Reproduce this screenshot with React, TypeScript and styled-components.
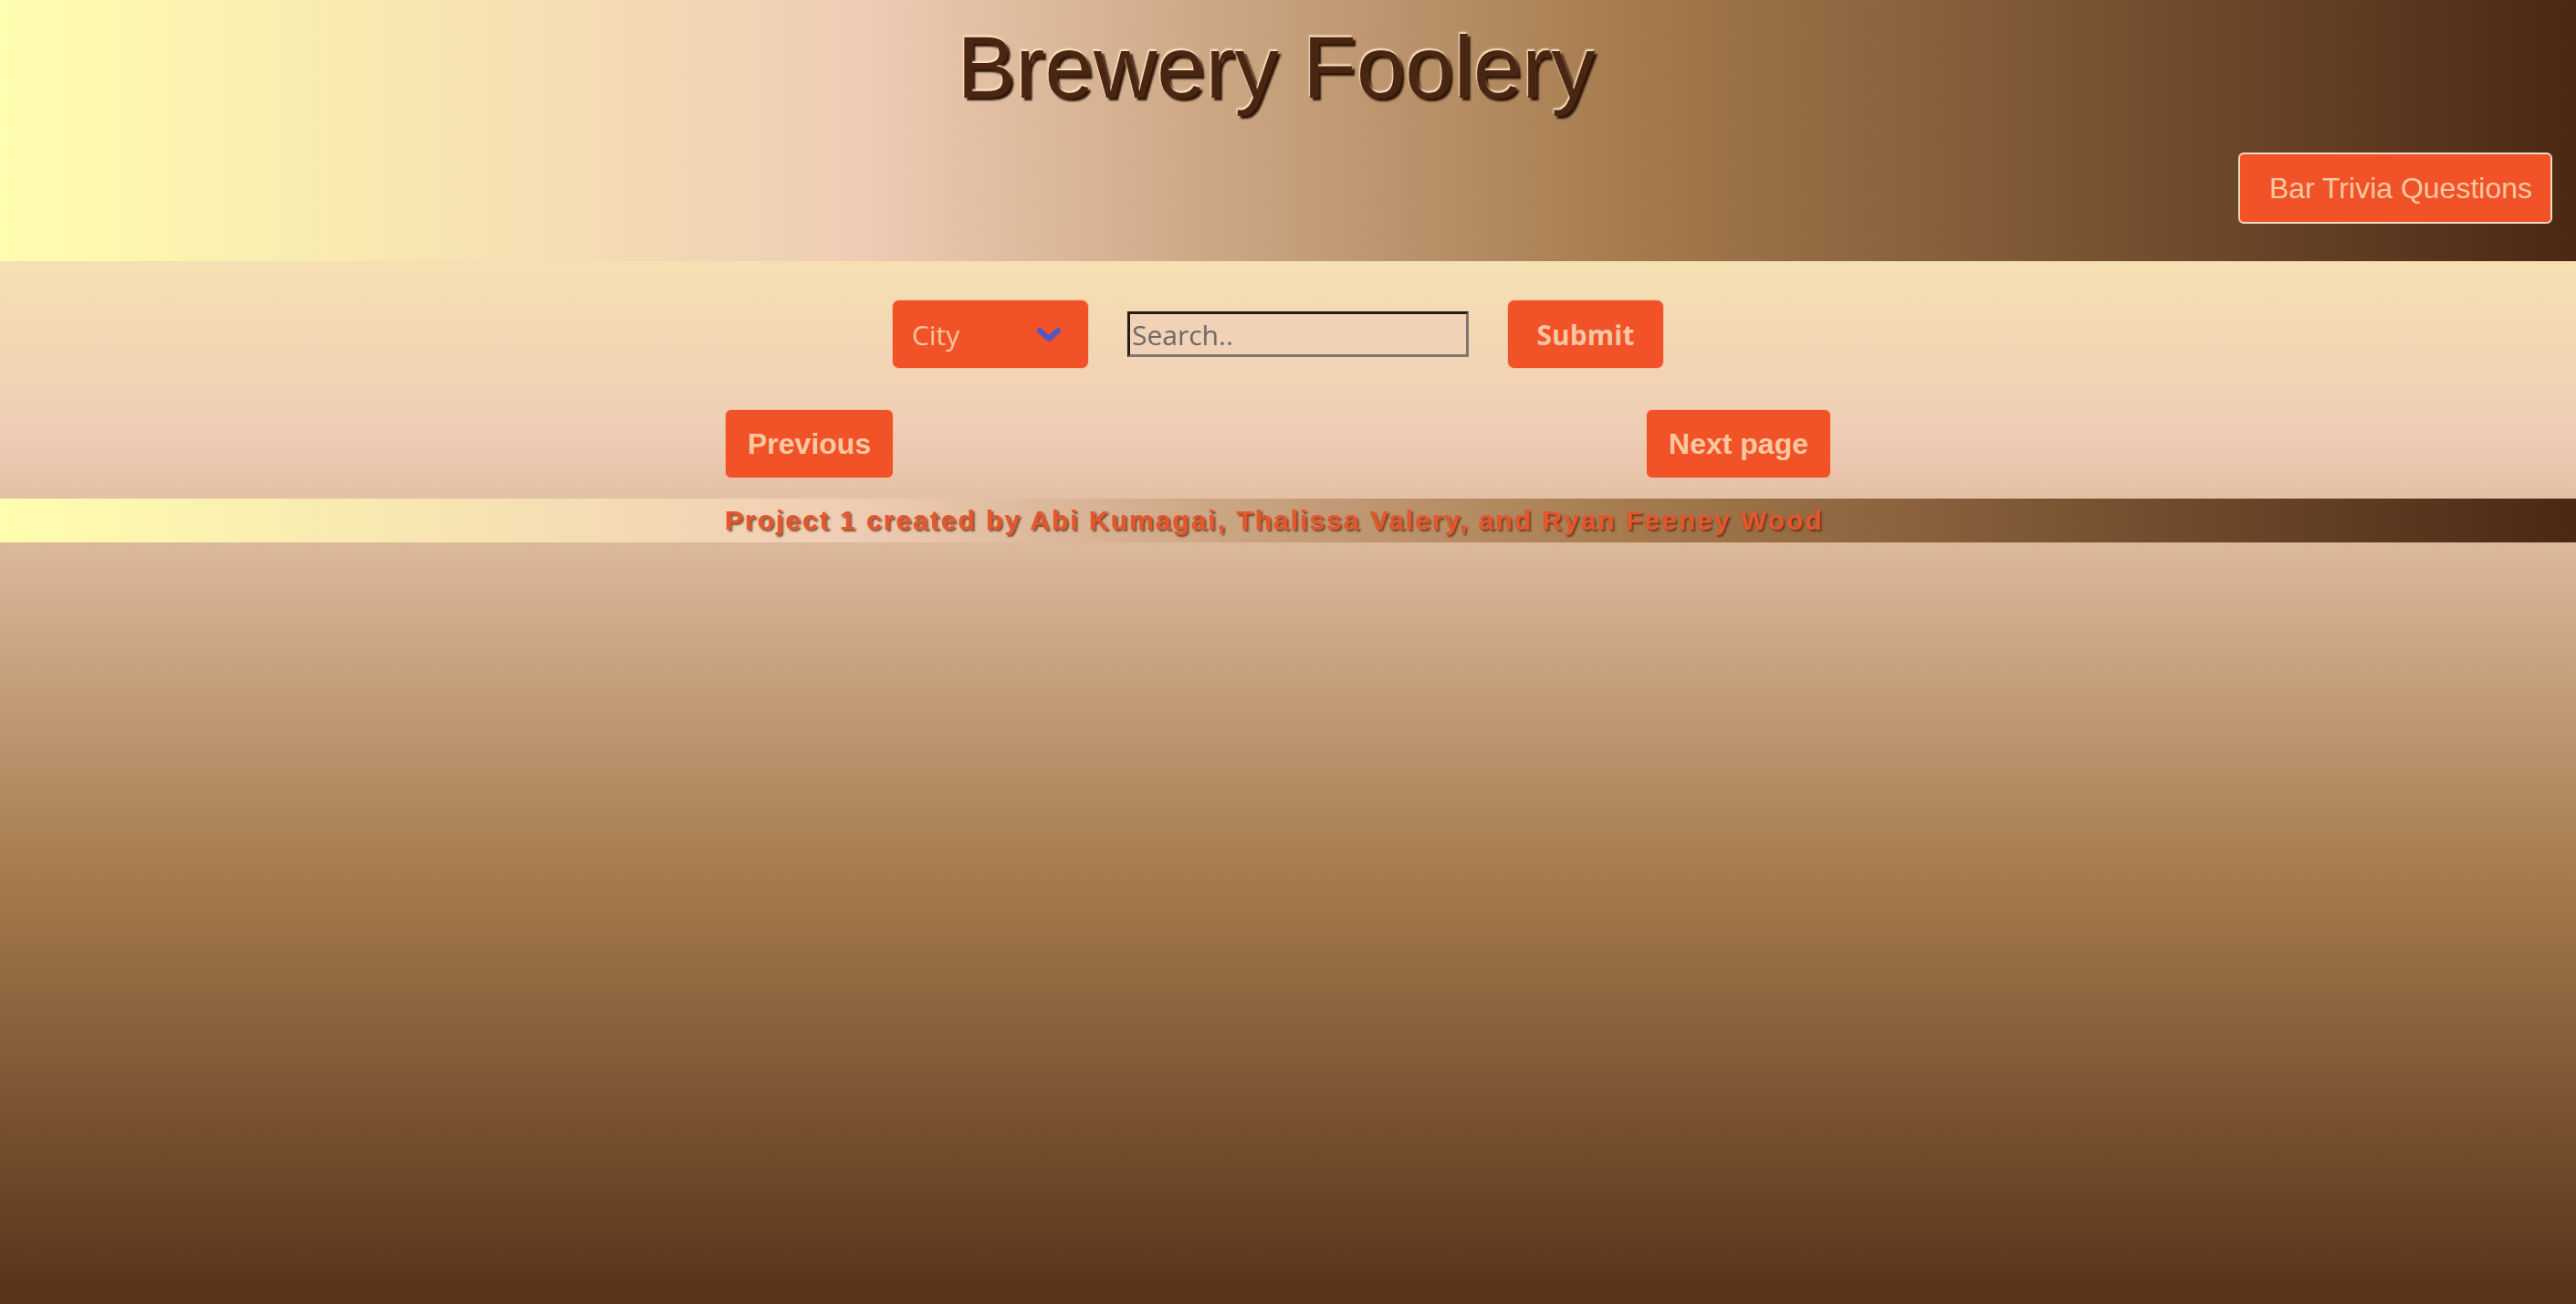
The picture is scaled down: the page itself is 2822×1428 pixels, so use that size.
import React from "react";
import styled, { createGlobalStyle } from "styled-components";

const GlobalStyle = createGlobalStyle`
  html, body {
    margin: 0;
    padding: 0;
  }
  body {
    min-height: 100vh;
    font-family: "Liberation Sans", Arial, sans-serif;
    background: linear-gradient(
      to bottom,
      #fffdaf 0%,
      #efcdb5 33%,
      #a67b4e 67%,
      #573219 100%
    );
    background-attachment: fixed;
  }
`;

const brewGradient = `linear-gradient(
  to right,
  #fffdae 0%,
  #efcdb5 33%,
  #a67b4e 63%,
  #4a2814 100%
)`;

const Header = styled.header`
  display: flex;
  flex-direction: column;
  background: ${brewGradient};
  padding: 20px 26px 41px 0;
  height: 286px;
  box-sizing: border-box;
`;

const Title = styled.h1`
  margin: 0 0 40px;
  text-align: center;
  font-family: "Liberation Sans", Arial, sans-serif;
  font-weight: 400;
  font-size: 96px;
  line-height: 107px;
  color: #4a2612;
  text-shadow: -1px -2px 2px #ffe9c9, 3px 3px 2px #2e1608;
`;

const HeaderActions = styled.div`
  display: flex;
  justify-content: flex-end;
`;

const TriviaButton = styled.button`
  height: 78px;
  padding: 0 20px 0 32px;
  background: #f25227;
  border: 2px solid #f1d9c2;
  border-radius: 6px;
  color: #f9c7a0;
  font-family: "Liberation Sans", Arial, sans-serif;
  font-size: 32px;
  cursor: pointer;
`;

const Main = styled.section`
  display: flex;
  flex-direction: column;
  align-items: center;
  gap: 44px;
  padding: 42px 22px 22px 0;
`;

const SearchForm = styled.form`
  display: flex;
  align-items: center;
  gap: 42px;
`;

const SelectShell = styled.div`
  position: relative;
  width: 216px;
  height: 76px;
`;

const CitySelect = styled.select`
  appearance: none;
  -webkit-appearance: none;
  width: 100%;
  height: 100%;
  box-sizing: border-box;
  padding: 0 60px 0 21px;
  background: #f25227;
  border: 1px solid #eec1a2;
  border-radius: 8px;
  color: #f9c6a0;
  font-family: "Open Sans", "Noto Sans", sans-serif;
  font-size: 30px;
  outline: none;
  cursor: pointer;
`;

const Chevron = styled.svg`
  position: absolute;
  right: 30px;
  top: 30px;
  width: 28px;
  height: 17px;
  pointer-events: none;
`;

const SearchInput = styled.input`
  width: 374px;
  height: 50px;
  box-sizing: border-box;
  padding: 0 2px;
  background: #f1d2b7;
  border-style: solid;
  border-width: 3px;
  border-color: #231d17 #7d7770 #7d7770 #231d17;
  color: #3a2a1e;
  font-family: "Open Sans", "Noto Sans", sans-serif;
  font-size: 30px;
  outline: none;
  &::placeholder {
    color: #6e6a66;
  }
`;

const SubmitButton = styled.button`
  width: 172px;
  height: 76px;
  background: #f25227;
  border: 1px solid #eec1a2;
  border-radius: 8px;
  color: #f8c6a2;
  font-family: "Open Sans", "Noto Sans", sans-serif;
  font-weight: 700;
  font-size: 30px;
  cursor: pointer;
`;

const Pager = styled.nav`
  width: 1212px;
  display: flex;
  justify-content: space-between;
  align-items: center;
`;

const PagerButton = styled.button`
  height: 76px;
  padding: 0 24px;
  background: #f25227;
  border: 1px solid #eec1a2;
  border-radius: 7px;
  color: #f9c8a1;
  font-family: "Liberation Sans", Arial, sans-serif;
  font-weight: 700;
  font-size: 32px;
  cursor: pointer;
`;

const Footer = styled.footer`
  display: flex;
  justify-content: center;
  height: 48px;
  padding-right: 22px;
  background: ${brewGradient};
`;

const FooterText = styled.p`
  margin: 0;
  width: 1212px;
  font-family: "Liberation Sans", Arial, sans-serif;
  font-weight: 700;
  font-size: 30px;
  letter-spacing: 2px;
  line-height: 48px;
  color: #e5562d;
  text-shadow: 2px 2px 2px rgba(90, 42, 16, 0.75);
  white-space: nowrap;
`;

export default function App() {
  return (
    <>
      <GlobalStyle />
      <Header>
        <Title>Brewery Foolery</Title>
        <HeaderActions>
          <TriviaButton type="button">Bar Trivia Questions</TriviaButton>
        </HeaderActions>
      </Header>
      <Main>
        <SearchForm onSubmit={(e) => e.preventDefault()}>
          <SelectShell>
            <CitySelect defaultValue="city">
              <option value="city">City</option>
              <option value="state">State</option>
              <option value="name">Name</option>
            </CitySelect>
            <Chevron viewBox="0 0 28 17" aria-hidden="true">
              <path
                d="M4 4 L14 13 L24 4"
                fill="none"
                stroke="#5157c5"
                strokeWidth="6"
                strokeLinecap="round"
                strokeLinejoin="round"
              />
            </Chevron>
          </SelectShell>
          <SearchInput type="text" placeholder="Search.." />
          <SubmitButton type="submit">Submit</SubmitButton>
        </SearchForm>
        <Pager>
          <PagerButton type="button">Previous</PagerButton>
          <PagerButton type="button">Next page</PagerButton>
        </Pager>
      </Main>
      <Footer>
        <FooterText>
          Project 1 created by Abi Kumagai, Thalissa Valery, and Ryan Feeney Wood
        </FooterText>
      </Footer>
    </>
  );
}
